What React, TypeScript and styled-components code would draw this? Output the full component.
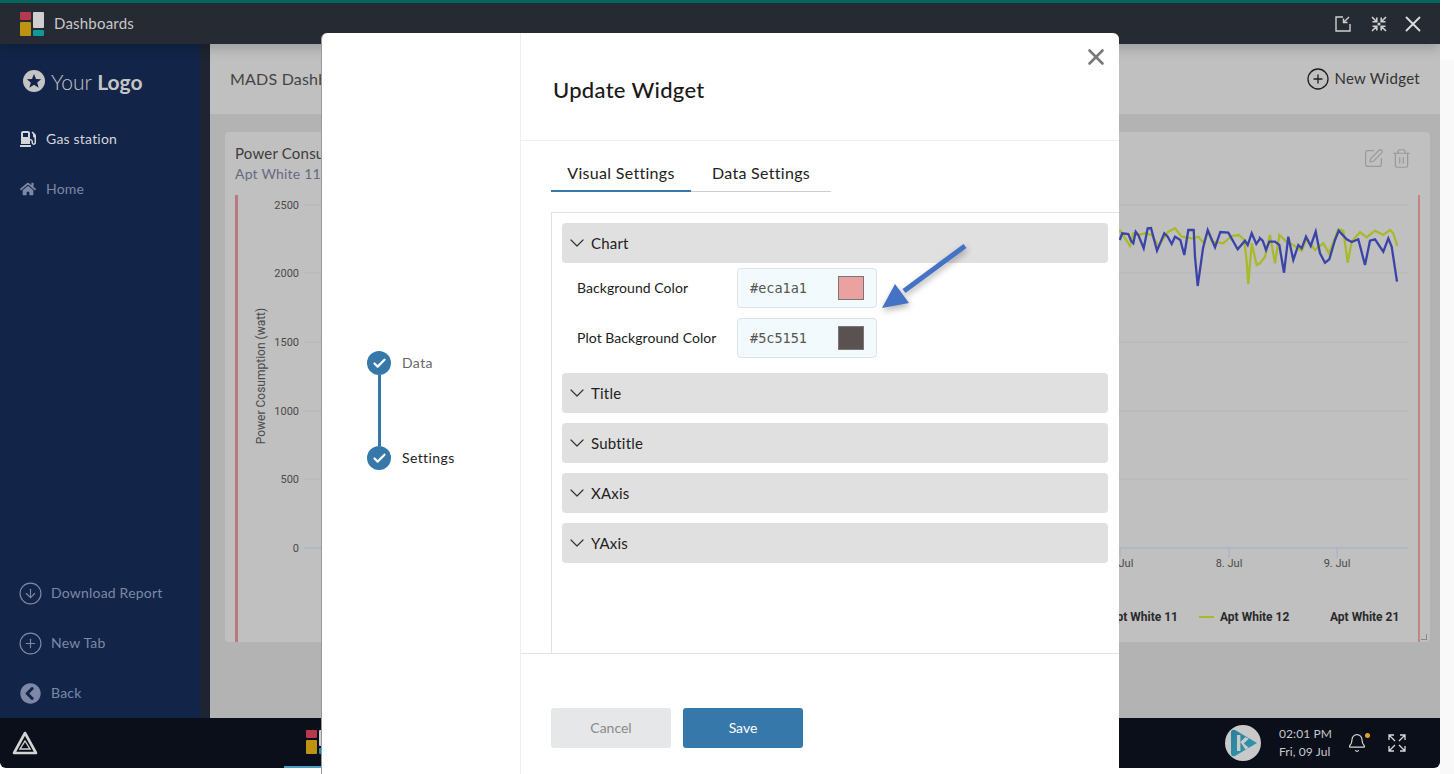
import React from 'react';
import styled, { createGlobalStyle } from 'styled-components';
import { Check, ChevronDown, CircleArrowDown, CirclePlus, SquarePen, Trash2, X, Bell } from 'lucide-react';
import { FaChevronCircleLeft, FaGasPump, FaHome } from 'react-icons/fa';

const UI_FONT = `Lato, 'Open Sans', sans-serif`;

const GlobalStyle = createGlobalStyle`
    html, body {
        margin: 0;
        padding: 0;
        height: 100%;
        overflow: hidden;
        background: #fff;
        font-family: ${UI_FONT};
        letter-spacing: 0.2px;
    }
    * {
        box-sizing: border-box;
    }
`;

// samples read off the chart, [x, y] in page pixels
const scale = (originX: number, points: number[][]) =>
    points.map(([x, y]) => [originX + x / 3 - 225, 220 + y / 3 - 195]);

const toPath = (points: number[][]) => points.map(([x, y]) => `${x.toFixed(1)},${y.toFixed(1)}`).join(' ');

const blueLine = [
    ...scale(1115, [
        [14, 60], [22, 40], [40, 42], [48, 62], [55, 70], [62, 35], [70, 45], [86, 85], [98, 25], [108, 24],
        [126, 92], [148, 40], [158, 50], [170, 72], [180, 50], [196, 60], [208, 105], [220, 30], [236, 30],
        [240, 110], [248, 198], [264, 85], [278, 30], [300, 82], [316, 36], [340, 38], [368, 88], [390, 62],
        [398, 75], [410, 40], [424, 72], [435, 56],
    ]),
    ...scale(1260, [
        [0, 55], [8, 62], [18, 90], [28, 65], [45, 65], [58, 75], [72, 158], [85, 50], [100, 120], [115, 75],
        [125, 85], [138, 50], [152, 78], [167, 35], [180, 100], [195, 128], [208, 118], [225, 60], [236, 32],
        [260, 58], [275, 66], [295, 58], [315, 135], [330, 62], [345, 58], [370, 95], [385, 55], [395, 80],
        [411, 185],
    ]),
];

const greenLine = [
    ...scale(1115, [
        [14, 30], [24, 45], [45, 78], [55, 40], [70, 45], [90, 40], [110, 45], [130, 78], [160, 35], [180, 25],
        [200, 50], [230, 55], [250, 50], [265, 68], [280, 35], [292, 65], [325, 70], [350, 48], [372, 45],
        [388, 60], [395, 125], [400, 192], [410, 70], [425, 135], [435, 130],
    ]),
    ...scale(1260, [
        [0, 130], [15, 110], [30, 45], [45, 130], [58, 45], [80, 65], [100, 75], [125, 92], [140, 55], [165, 90],
        [190, 70], [207, 100], [235, 28], [250, 32], [263, 128], [275, 65], [300, 36], [320, 52], [345, 32],
        [370, 45], [390, 30], [400, 40], [412, 78],
    ]),
];

const yTicks = [
    { label: '2500', y: 10 },
    { label: '2000', y: 78 },
    { label: '1500', y: 147 },
    { label: '1000', y: 216 },
    { label: '500', y: 284 },
];

const xTicks = [
    { label: '7. Jul', x: 895 },
    { label: '8. Jul', x: 1004 },
    { label: '9. Jul', x: 1112 },
];

const DashboardMark: React.FC = () => (
    <svg width="24" height="24" viewBox="0 0 24 24">
        <rect x="0" y="0" width="11" height="8" rx="1" fill="#b8384d" />
        <rect x="13" y="0" width="11" height="16" rx="1" fill="#cfcfcf" />
        <rect x="0" y="10" width="11" height="14" rx="1" fill="#c09213" />
        <rect x="13" y="18" width="11" height="6" rx="1" fill="#0d9a9f" />
    </svg>
);

const PowerChart: React.FC = () => (
    <ChartSvg viewBox="0 0 1205 447" width="1205" height="447">
        <rect x="10" y="0" width="3" height="447" fill="#b87a7c" />
        <rect x="1193" y="0" width="2" height="447" fill="#c58385" />
        {yTicks.map(tick => (
            <g key={tick.label}>
                <line x1="79" x2="1183" y1={tick.y} y2={tick.y} stroke="#b6b6b6" />
                <TickLabel x="74" y={tick.y + 4} textAnchor="end">
                    {tick.label}
                </TickLabel>
            </g>
        ))}
        <line x1="79" x2="1183" y1="353" y2="353" stroke="#9fb0c8" />
        <TickLabel x="74" y="357" textAnchor="end">
            0
        </TickLabel>
        <AxisTitle transform="translate(40 181) rotate(-90)" textAnchor="middle">
            Power Cosumption (watt)
        </AxisTitle>
        {xTicks.map(tick => (
            <g key={tick.label}>
                <line x1={tick.x} x2={tick.x} y1="353" y2="363" stroke="#9fb0c8" />
                <TickLabel x={tick.x} y="372" textAnchor="middle">
                    {tick.label}
                </TickLabel>
            </g>
        ))}
        <polyline points={toPath(greenLine)} fill="none" stroke="#aab92c" strokeWidth="2.3" />
        <polyline points={toPath(blueLine)} fill="none" stroke="#3a44a8" strokeWidth="2.3" />
        <LegendLabel x="953" y="426" textAnchor="end">
            Apt White 11
        </LegendLabel>
        <line x1="974" x2="989" y1="422" y2="422" stroke="#aab92c" strokeWidth="2" />
        <LegendLabel x="995" y="426">
            Apt White 12
        </LegendLabel>
        <LegendLabel x="1105" y="426">
            Apt White 21
        </LegendLabel>
    </ChartSvg>
);

const StepperColumn: React.FC = () => (
    <Stepper>
        <Step>
            <StepDot>
                <Check size={15} strokeWidth={3.5} color="#fff" />
            </StepDot>
            <StepLabel>Data</StepLabel>
        </Step>
        <StepLine />
        <Step>
            <StepDot>
                <Check size={15} strokeWidth={3.5} color="#fff" />
            </StepDot>
            <StepLabel active>Settings</StepLabel>
        </Step>
    </Stepper>
);

const AccordionRow: React.FC<{ title: string }> = ({ title }) => (
    <AccordionHead>
        <ChevronDown size={24} strokeWidth={1.2} color="#333" />
        <AccordionTitle>{title}</AccordionTitle>
    </AccordionHead>
);

const ColorRow: React.FC<{ label: string; value: string }> = ({ label, value }) => (
    <FieldRow>
        <FieldLabel>{label}</FieldLabel>
        <ColorInput>
            <ColorValue>{value}</ColorValue>
            <Swatch color={value} />
        </ColorInput>
    </FieldRow>
);

const UpdateWidgetModal: React.FC = () => (
    <Modal>
        <StepperColumn />
        <ModalMain>
            <ModalHeader>
                <ModalTitle>Update Widget</ModalTitle>
                <CloseButton>
                    <X size={26} strokeWidth={2.4} color="#777" />
                </CloseButton>
            </ModalHeader>
            <Tabs>
                <Tab active>Visual Settings</Tab>
                <Tab>Data Settings</Tab>
            </Tabs>
            <SettingsPanel>
                <AccordionRow title="Chart" />
                <Fields>
                    <ColorRow label="Background Color" value="#eca1a1" />
                    <ColorRow label="Plot Background Color" value="#5c5151" />
                </Fields>
                <AccordionRow title="Title" />
                <AccordionRow title="Subtitle" />
                <AccordionRow title="XAxis" />
                <AccordionRow title="YAxis" />
            </SettingsPanel>
            <ModalFooter>
                <CancelButton>Cancel</CancelButton>
                <SaveButton>Save</SaveButton>
            </ModalFooter>
        </ModalMain>
        <ArrowNote viewBox="0 0 100 80" width="100" height="80">
            <line x1="89" y1="11" x2="28" y2="56" stroke="#4472c4" strokeWidth="5" />
            <polygon points="6,73 19,49 33,68" fill="#4472c4" />
        </ArrowNote>
    </Modal>
);

export default function App() {
    return (
        <Page>
            <GlobalStyle />
            <AppWindow>
                <TopBar>
                    <DashboardMark />
                    <TopTitle>Dashboards</TopTitle>
                    <TopActions>
                        <DockIcon width="18" height="18" viewBox="0 0 18 18" fill="none" stroke="#cfcfcf" strokeWidth="1.4">
                            <path d="M9 2H2v14h14V9" />
                            <path d="M15 2 9.5 7.5M9.5 3.5v4h4" />
                        </DockIcon>
                        <svg width="18" height="18" viewBox="0 0 18 18" fill="none" stroke="#cfcfcf" strokeWidth="1.6">
                            <path d="M2 2l4.5 4.5M6.8 2.5v4.3H2.5M16 2l-4.5 4.5M11.2 2.5v4.3h4.3M2 16l4.5-4.5M6.8 15.5v-4.3H2.5M16 16l-4.5-4.5M11.2 15.5v-4.3h4.3" />
                            <circle cx="9" cy="9" r="0.8" fill="#cfcfcf" />
                        </svg>
                        <X size={26} strokeWidth={1.7} color="#dcdcdc" />
                    </TopActions>
                </TopBar>
                <MainArea>
                    <Sidebar>
                        <Brand>
                            <BrandMark>
                                <svg width="22" height="22" viewBox="0 0 22 22">
                                    <circle cx="11" cy="11" r="11" fill="#c4c4c4" />
                                    <polygon
                                        points="11,4 13,9 18.2,9.2 14.2,12.6 15.6,17.8 11,14.8 6.4,17.8 7.8,12.6 3.8,9.2 9,9"
                                        fill="#122448"
                                    />
                                </svg>
                            </BrandMark>
                            <BrandName>
                                Your <strong>Logo</strong>
                            </BrandName>
                        </Brand>
                        <NavItem active>
                            <NavGlyph>
                                <FaGasPump size={16} />
                            </NavGlyph>
                            Gas station
                        </NavItem>
                        <NavItem>
                            <NavGlyph>
                                <FaHome size={16} />
                            </NavGlyph>
                            Home
                        </NavItem>
                        <SidebarBottom>
                            <NavItem>
                                <NavGlyph wide>
                                    <CircleArrowDown size={25} strokeWidth={1.1} />
                                </NavGlyph>
                                Download Report
                            </NavItem>
                            <NavItem>
                                <NavGlyph wide>
                                    <CirclePlus size={25} strokeWidth={1.1} />
                                </NavGlyph>
                                New Tab
                            </NavItem>
                            <NavItem>
                                <NavGlyph wide>
                                    <BackIcon size={21} />
                                </NavGlyph>
                                Back
                            </NavItem>
                        </SidebarBottom>
                    </Sidebar>
                    <SideStrip />
                    <Content>
                        <ContentHeader>
                            <ContentTitle>MADS Dashboard</ContentTitle>
                            <NewWidget>
                                <CirclePlus size={24} strokeWidth={1.3} color="#1d1d1d" />
                                <NewWidgetLabel>New Widget</NewWidgetLabel>
                            </NewWidget>
                        </ContentHeader>
                        <ContentBody>
                            <WidgetCard>
                                <WidgetHead>
                                    <div>
                                        <WidgetTitle>Power Consumption</WidgetTitle>
                                        <WidgetSubtitle>Apt White 11</WidgetSubtitle>
                                    </div>
                                    <WidgetActions>
                                        <SquarePen size={21} strokeWidth={1.4} color="#999" />
                                        <Trash2 size={21} strokeWidth={1.4} color="#999" />
                                    </WidgetActions>
                                </WidgetHead>
                                <PowerChart />
                                <ResizeHandle />
                            </WidgetCard>
                        </ContentBody>
                    </Content>
                </MainArea>
                <BottomBar>
                    <svg width="26" height="24" viewBox="0 0 26 24" fill="none" stroke="#d4d4d4">
                        <path d="M13 2 24 22H2Z" strokeWidth="2.6" strokeLinejoin="round" />
                        <path d="M13 10 18 18H8Z" strokeWidth="1.4" />
                    </svg>
                    <TaskButton>
                        <DashboardMark />
                    </TaskButton>
                    <TrayLogo>
                        <svg width="36" height="36" viewBox="0 0 36 36">
                            <defs>
                                <linearGradient id="trayTeal" x1="0" y1="0" x2="1" y2="1">
                                    <stop offset="0" stopColor="#2b7f9c" />
                                    <stop offset="1" stopColor="#2f9db0" />
                                </linearGradient>
                            </defs>
                            <circle cx="18" cy="18" r="18" fill="#c9c9c9" />
                            <path d="M6 8Q6 4 10 5L32 18 10 31Q6 32 6 28Z" fill="url(#trayTeal)" />
                            <path d="M12 10h3.4v16H12zM15.4 17l5-5 3.4 1.8-5 4.6 5 4.4-3.2 2z" fill="#c9c9c9" />
                        </svg>
                    </TrayLogo>
                    <Clock>
                        <span>02:01 PM</span>
                        <span>Fri, 09 Jul</span>
                    </Clock>
                    <BellWrap>
                        <Bell size={20} strokeWidth={1.4} color="#d8d8d8" />
                        <BellDot />
                    </BellWrap>
                    <svg width="18" height="18" viewBox="0 0 18 18" fill="none" stroke="#d8d8d8" strokeWidth="1.3">
                        <path d="M1 6V1h5M1 1l6 6M12 1h5v5M17 1l-6 6M1 12v5h5M1 17l6-6M12 17h5v-5M17 17l-6-6" />
                    </svg>
                </BottomBar>
            </AppWindow>
            <Gutter />
            <UpdateWidgetModal />
        </Page>
    );
}

const Page = styled.div`
    position: relative;
    display: flex;
    width: 1454px;
    height: 774px;
    overflow: hidden;
    background: #fff;
    color: #222;
`;

const AppWindow = styled.div`
    width: 1440px;
    height: 768px;
    display: flex;
    flex-direction: column;
    border-radius: 0 0 6px 6px;
    overflow: hidden;
`;

const Gutter = styled.div`
    flex: 1;
    margin-top: 60px;
    background: #f9f9f9;
`;

const TopBar = styled.header`
    height: 44px;
    flex: none;
    display: flex;
    align-items: center;
    padding: 0 14px 0 20px;
    background: #262a33;
    border-top: 3px solid #00645f;
    position: relative;
    z-index: 1;
    box-shadow: 0 4px 12px rgba(0, 0, 0, 0.2);
`;

const TopTitle = styled.span`
    margin-left: 10px;
    padding-bottom: 1px;
    font-size: 15px;
    color: #c8c8c8;
`;

const TopActions = styled.div`
    margin-left: auto;
    display: flex;
    align-items: center;
    gap: 12px;
`;

const DockIcon = styled.svg`
    margin-right: 6px;
`;

const MainArea = styled.div`
    flex: 1;
    display: flex;
    min-height: 0;
`;

const Sidebar = styled.nav`
    width: 200px;
    flex: none;
    display: flex;
    flex-direction: column;
    background: #122448;
`;

const Brand = styled.div`
    height: 70px;
    padding-top: 4px;
    display: flex;
    align-items: center;
    padding-left: 23px;
    gap: 6px;
`;

const BrandMark = styled.span`
    display: flex;
`;

const BrandName = styled.span`
    font-size: 21px;
    font-weight: 300;
    letter-spacing: 0;
    color: #c4c4c4;

    strong {
        font-weight: 700;
    }
`;

const NavItem = styled.div<{ active?: boolean }>`
    height: 50px;
    display: flex;
    align-items: center;
    padding: 0 0 2px 20px;
    font-size: 14px;
    color: ${({ active }) => (active ? '#d4d6da' : '#7d88a6')};
`;

const NavGlyph = styled.span<{ wide?: boolean }>`
    width: ${({ wide }) => (wide ? 33 : 26)}px;
    margin-left: ${({ wide }) => (wide ? -2 : 0)}px;
    padding-top: 2px;
    display: flex;
    align-items: center;
`;

const BackIcon = styled(FaChevronCircleLeft)`
    margin-left: 2px;
`;

const SidebarBottom = styled.div`
    margin-top: auto;
`;

const SideStrip = styled.div`
    width: 10px;
    flex: none;
    background: #1e2431;
`;

const Content = styled.main`
    flex: 1;
    min-width: 0;
    display: flex;
    flex-direction: column;
    background: #b3b3b3;
`;

const ContentHeader = styled.div`
    height: 70px;
    flex: none;
    display: flex;
    align-items: center;
    justify-content: space-between;
    padding: 0 20px;
    background: #c0c0c0;
`;

const ContentTitle = styled.h1`
    margin: 0;
    padding-bottom: 2px;
    font-size: 16px;
    font-weight: 400;
    color: #444;
`;

const NewWidget = styled.div`
    display: flex;
    align-items: center;
    gap: 4px;
    font-size: 15px;
    color: #333;
`;

const NewWidgetLabel = styled.span`
    padding-bottom: 2px;
    letter-spacing: 0.3px;
`;

const ContentBody = styled.div`
    padding: 18px 10px 0 15px;
`;

const WidgetCard = styled.section`
    position: relative;
    height: 510px;
    background: #c0c0c0;
    border-radius: 4px;
    overflow: hidden;
`;

const WidgetHead = styled.div`
    height: 63px;
    display: flex;
    justify-content: space-between;
    padding: 12px 18px 0 10px;
`;

const WidgetTitle = styled.div`
    font-size: 15px;
    line-height: 19px;
    color: #3c3c3c;
`;

const WidgetSubtitle = styled.div`
    margin-top: 1px;
    font-size: 14px;
    line-height: 19px;
    color: #666a80;
`;

const WidgetActions = styled.div`
    display: flex;
    gap: 7px;
    padding-top: 4px;
`;

const ChartSvg = styled.svg`
    display: block;
`;

const ChartText = styled.text`
    font-family: Roboto, sans-serif;
    letter-spacing: 0;
`;

const TickLabel = styled(ChartText)`
    font-size: 11px;
    fill: #4a4a4a;
`;

const AxisTitle = styled(ChartText)`
    font-size: 12px;
    fill: #4a4a4a;
`;

const LegendLabel = styled(ChartText)`
    font-size: 12px;
    font-weight: 700;
    fill: #2a2a2a;
`;

const ResizeHandle = styled.span`
    position: absolute;
    right: 3px;
    bottom: 2px;
    width: 6px;
    height: 6px;
    border-right: 1px solid #888;
    border-bottom: 1px solid #888;
`;

const BottomBar = styled.footer`
    height: 50px;
    flex: none;
    display: flex;
    align-items: center;
    padding: 0 34px 0 12px;
    background: #0b0f1a;
`;

const TaskButton = styled.div`
    width: 68px;
    height: 50px;
    margin-left: 246px;
    display: flex;
    align-items: center;
    justify-content: center;
    border-bottom: 2px solid #4a9ec4;
`;

const TrayLogo = styled.div`
    margin-left: auto;
    display: flex;
`;

const Clock = styled.div`
    margin-left: 18px;
    display: flex;
    flex-direction: column;
    font-size: 12px;
    line-height: 18px;
    letter-spacing: 0.1px;
    color: #c8c8c8;
`;

const BellWrap = styled.div`
    position: relative;
    display: flex;
    margin: 0 21px 0 15px;
`;

const BellDot = styled.span`
    position: absolute;
    top: 0;
    right: -3px;
    width: 5px;
    height: 5px;
    border-radius: 50%;
    background: #dca425;
`;

const Modal = styled.div`
    position: absolute;
    z-index: 2;
    left: 321px;
    top: 33px;
    width: 798px;
    height: 741px;
    display: flex;
    background: #fff;
    border-left: 1px solid #999;
    border-radius: 6px 6px 0 0;
    overflow: hidden;
`;

const Stepper = styled.div`
    width: 199px;
    flex: none;
    display: flex;
    flex-direction: column;
    padding: 318px 0 0 45px;
    border-right: 1px solid #eee;
`;

const Step = styled.div`
    display: flex;
    align-items: center;
    gap: 11px;
    height: 24px;
`;

const StepDot = styled.span`
    width: 24px;
    height: 24px;
    border-radius: 50%;
    display: flex;
    align-items: center;
    justify-content: center;
    background: #3778ab;
`;

const StepLabel = styled.span<{ active?: boolean }>`
    padding-bottom: 2px;
    font-size: 14px;
    letter-spacing: 0.4px;
    color: ${({ active }) => (active ? '#222' : '#666')};
`;

const StepLine = styled.span`
    width: 3px;
    height: 71px;
    margin-left: 11px;
    background: #3778ab;
`;

const ModalMain = styled.div`
    position: relative;
    flex: 1;
    min-width: 0;
    display: flex;
    flex-direction: column;
`;

const ModalHeader = styled.div`
    height: 108px;
    flex: none;
    padding: 41px 0 0 32px;
    border-bottom: 1px solid #f0f0f0;
`;

const ModalTitle = styled.h2`
    margin: 0;
    font-size: 22px;
    line-height: 32px;
    font-weight: 500;
    letter-spacing: 0.3px;
    color: #1a1a1a;
`;

const CloseButton = styled.span`
    position: absolute;
    top: 11px;
    right: 10px;
    display: flex;
`;

const Tabs = styled.div`
    width: 280px;
    height: 36px;
    margin: 15px 0 0 30px;
    flex: none;
    display: flex;
    border-bottom: 1px solid #ccc;
`;

const Tab = styled.div<{ active?: boolean }>`
    width: 140px;
    height: 36px;
    padding-top: 7px;
    text-align: center;
    font-size: 16px;
    letter-spacing: 0.3px;
    color: #222;
    border-bottom: 2px solid ${({ active }) => (active ? '#3778ab' : 'transparent')};
`;

const SettingsPanel = styled.div`
    height: 441px;
    flex: none;
    margin: 20px 0 0 30px;
    padding: 10px 11px 0 10px;
    display: flex;
    flex-direction: column;
    gap: 10px;
    border-left: 1px solid #e3e3e3;
    border-top: 1px solid #e3e3e3;
`;

const AccordionHead = styled.div`
    height: 40px;
    flex: none;
    display: flex;
    align-items: center;
    gap: 2px;
    padding-left: 3px;
    background: #e0e0e0;
    border-radius: 4px;
    font-size: 15px;
    color: #222;
`;

const AccordionTitle = styled.span`
    padding-bottom: 1px;
`;

const Fields = styled.div`
    margin-top: -5px;
    display: flex;
    flex-direction: column;
    gap: 10px;
    padding-bottom: 5px;
`;

const FieldRow = styled.div`
    display: flex;
    align-items: center;
    padding-left: 15px;
`;

const FieldLabel = styled.span`
    width: 160px;
    padding-bottom: 2px;
    font-size: 14px;
    letter-spacing: 0.05px;
    color: #222;
`;

const ColorInput = styled.div`
    width: 140px;
    height: 40px;
    display: flex;
    align-items: center;
    justify-content: space-between;
    padding: 0 12px;
    background: #f3fafe;
    border: 1px solid #dde2e6;
    border-radius: 4px;
`;

const ColorValue = styled.span`
    font-family: 'DejaVu Sans Mono', monospace;
    font-size: 13.5px;
    letter-spacing: 0;
    color: #555;
`;

const Swatch = styled.span<{ color: string }>`
    width: 26px;
    height: 24px;
    background: ${({ color }) => color};
    border: 1px solid #777;
`;

const ModalFooter = styled.div`
    flex: 1;
    display: flex;
    gap: 12px;
    padding: 54px 0 0 30px;
    border-top: 1px solid #e3e3e3;
`;

const FooterButton = styled.button`
    width: 120px;
    height: 40px;
    padding: 0 0 2px;
    border: none;
    border-radius: 3px;
    font-family: ${UI_FONT};
    font-size: 14px;
`;

const CancelButton = styled(FooterButton)`
    background: #e6e7e8;
    color: #8a8a8a;
`;

const SaveButton = styled(FooterButton)`
    background: #3778ab;
    color: #fff;
`;

const ArrowNote = styled.svg`
    position: absolute;
    left: 554px;
    top: 202px;
    filter: drop-shadow(1px 3px 3px rgba(0, 0, 0, 0.3));
`;
